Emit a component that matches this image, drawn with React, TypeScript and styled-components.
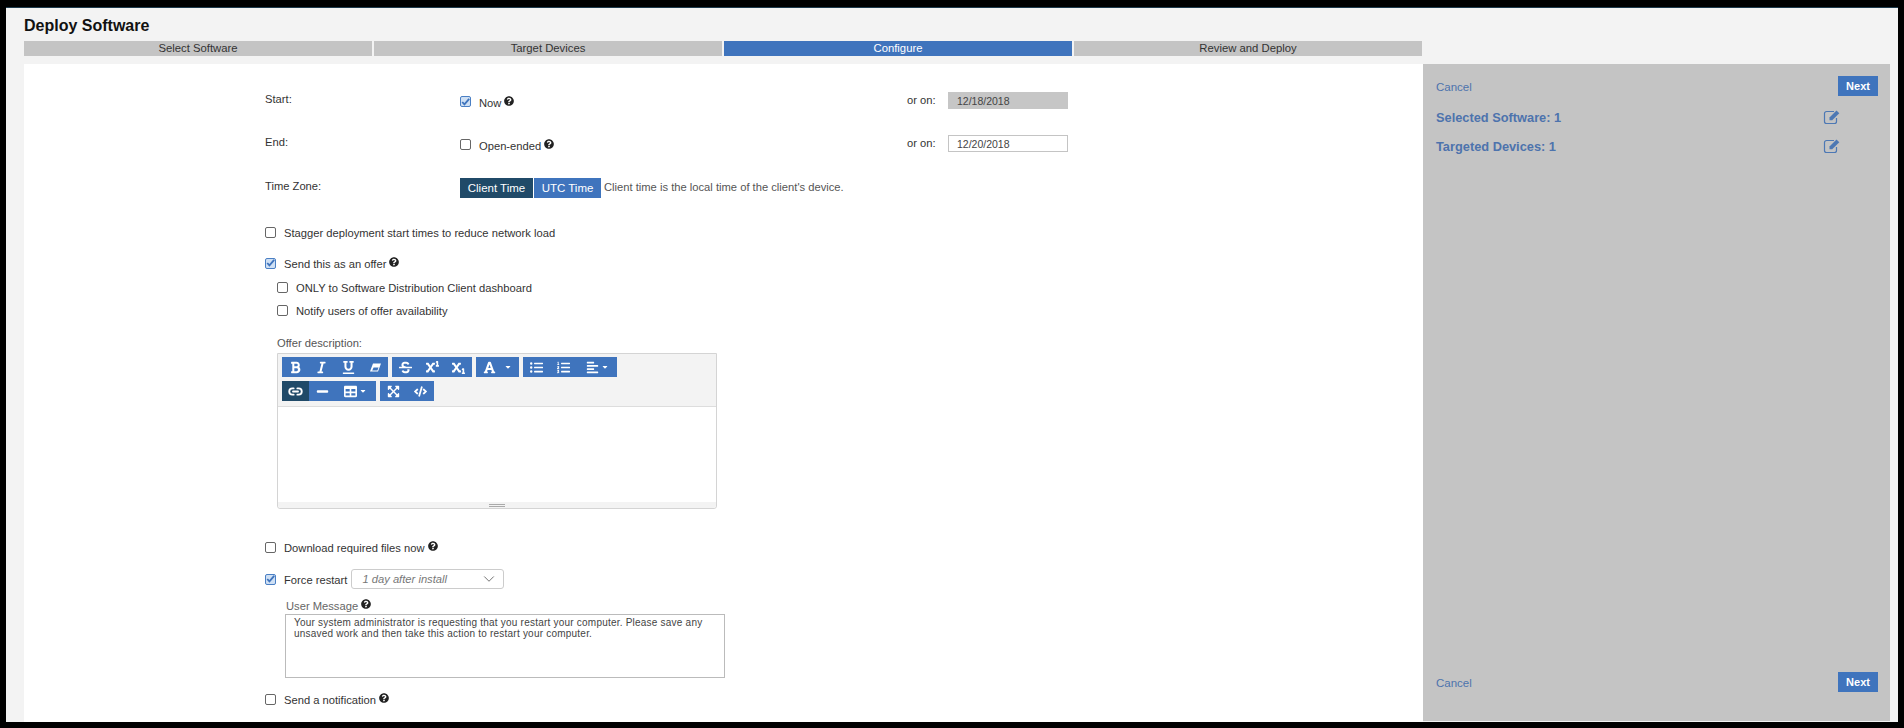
import React from "react";
import styled, { createGlobalStyle } from "styled-components";
import { FaBold, FaItalic, FaUnderline, FaStrikethrough, FaSuperscript, FaSubscript, FaFont, FaListUl, FaListOl, FaAlignLeft, FaMinus, FaTable, FaExpandArrowsAlt, FaCode, FaQuestionCircle, FaCaretDown } from "react-icons/fa";
import { Link2, ChevronDown } from "lucide-react";

const Global = createGlobalStyle`
  html, body { margin: 0; padding: 0; background: #000; }
  body { font-family: "Liberation Sans", Arial, sans-serif; font-size: 11.2px; color: #333; }
`;

const Frame = styled.div`
  box-sizing: border-box; width: 1904px; height: 728px; background: #000;
  padding: 7px 6px 6px 6px; overflow: hidden;
`;
const Page = styled.div`
  height: 715px; background: #f3f3f3; border-top: 1px solid #1d3a4c; box-sizing: border-box;
  padding: 0 8px 0 18px; display: flex; flex-direction: column; overflow: hidden;
`;
const Title = styled.h1`
  margin: 6px 0 0; height: 27px; line-height: 23px; font-size: 16px; font-weight: 700; color: #111;
`;
const Tabs = styled.div`
  display: grid; grid-template-columns: repeat(4, 1fr); gap: 2px; width: 1398px; height: 15px;
`;
const Tab = styled.div<{ $active?: boolean }>`
  background: ${p => p.$active ? "#3f74bd" : "#c4c4c4"};
  color: ${p => p.$active ? "#fff" : "#333"};
  font-size: 11.3px; line-height: 15px; text-align: center;
`;
const Body = styled.div`
  margin-top: 8px; flex: 1; display: flex; min-height: 0;
`;
const Main = styled.main`
  width: 1399px; background: #fff; box-sizing: border-box; padding: 0 0 0 241px; overflow: hidden;
`;
const Side = styled.aside`
  flex: 1; background: #c4c4c4; box-sizing: border-box; padding: 12px 12px 0 13px;
  display: flex; flex-direction: column; margin-bottom: 1px;
`;
const Row = styled.div<{ $top: number; $h?: number; $indent?: number }>`
  display: flex; align-items: center; margin-top: ${p => p.$top}px; height: ${p => p.$h ?? 16}px;
  margin-left: ${p => p.$indent ?? 0}px;
`;
const FieldLabel = styled.div`
  width: 195px; color: #333; position: relative; top: -2px;
`;
const Cell = styled.div`
  width: 447px; display: flex; align-items: center; position: relative; top: 2px;
`;
const OrOn = styled.div`
  width: 41px; color: #333; position: relative; top: -1px;
`;
const DateInput = styled.input<{ $off?: boolean }>`
  box-sizing: border-box; width: 120px; height: 17px; padding: 0 8px;
  font: 10.5px "Liberation Sans", Arial, sans-serif; color: #444;
  border: 1px solid ${p => p.$off ? "#c6c6c6" : "#c4c4c4"};
  background: ${p => p.$off ? "#c6c6c6" : "#fff"}; outline: none;
`;
const Box = styled.span<{ $on?: boolean }>`
  box-sizing: border-box; width: 11px; height: 11px; flex: none; border-radius: 2px;
  border: 1px solid ${p => p.$on ? "#4a7fc4" : "#666"};
  background: ${p => p.$on ? "#cfe0f4" : "#fff"};
  margin-right: 8px; display: flex; align-items: center; justify-content: center;
  position: relative; top: -1px;
`;
const Text = styled.span`
  color: #333; white-space: nowrap;
`;
const Help = styled(FaQuestionCircle)`
  width: 10px; height: 10px; color: #222; margin-left: 3px; position: relative; top: -2px;
`;
const Check = ({ on, children }: { on?: boolean; children: React.ReactNode }) => (
  <>
    <Box $on={on}>
      {on && (
        <svg width="11" height="10" viewBox="0 0 11 10">
          <path d="M1.5 5 L4.2 8 L10 1.2" fill="none" stroke="#3f74bd" strokeWidth="2.2" />
        </svg>
      )}
    </Box>
    <Text>{children}</Text>
  </>
);
const ToggleGroup = styled.div`
  display: flex; gap: 1px;
`;
const Toggle = styled.button<{ $active?: boolean; $w: number }>`
  width: ${p => p.$w}px; height: 20px; border: 0; padding: 0;
  background: ${p => p.$active ? "#204a68" : "#3f74bd"}; color: #fff;
  font: 11.5px "Liberation Sans", Arial, sans-serif;
`;
const Hint = styled.span`
  color: #555; margin-left: 3px; white-space: nowrap; position: relative; top: -1px;
`;
const Caption = styled.div`
  color: #555; margin: 18px 0 0 12px; white-space: nowrap;
`;
const Editor = styled.div`
  margin: 4px 0 0 12px; width: 440px; height: 156px; box-sizing: border-box; border: 1px solid #d4d4d4;
  border-radius: 0 0 3px 3px; display: flex; flex-direction: column; background: #fff;
`;
const EditorBar = styled.div`
  height: 53px; flex: none; background: #f3f3f3; border-bottom: 1px solid #ddd;
  padding: 3px 0 0 4px; display: flex; flex-direction: column; gap: 4px; box-sizing: border-box;
`;
const BarRow = styled.div`
  display: flex; gap: 4px;
`;
const BarGroup = styled.div`
  display: flex; height: 20px;
`;
const Tool = styled.span<{ $w?: number; $active?: boolean }>`
  width: ${p => p.$w ?? 27}px; height: 20px; display: flex; align-items: center; justify-content: center;
  background: ${p => p.$active ? "#204a68" : "#3f74bd"}; color: #fff;
  svg { width: 13px; height: 13px; }
`;
const Caret = styled(FaCaretDown)<{ $gap?: number }>`
  && { width: 8px; height: 8px; margin-left: ${p => p.$gap ?? 2}px; }
`;
const LinkIcon = styled(Link2)`
  && { width: 15px; height: 15px; }
`;
const EditArea = styled.div`
  flex: 1;
`;
const Grip = styled.div`
  height: 6px; flex: none; background: #f3f3f3; display: flex; justify-content: center; align-items: center;
  border-radius: 0 0 3px 3px;
  &::before { content: ""; width: 16px; height: 1px; border-top: 1px solid #aaa; border-bottom: 1px solid #aaa; }
`;
const Select = styled.div`
  box-sizing: border-box; width: 153px; height: 20px; margin-left: 4px; border: 1px solid #ccc; border-radius: 3px;
  padding: 0 5px 0 10px; display: flex; align-items: center; justify-content: space-between;
  font-style: italic; color: #777; background: #fff;
  position: relative; top: -1px;
`;
const SubLabel = styled.div`
  margin: 9px 0 0 21px; height: 14px; line-height: 14px; color: #666; display: flex; align-items: center;
`;
const Message = styled.textarea`
  display: block; box-sizing: border-box; margin: 1px 0 0 20px; width: 440px; height: 64px; resize: none;
  border: 1px solid #bbb; padding: 2px 8px; outline: none; overflow: hidden;
  font: 10px/11px "Liberation Sans", Arial, sans-serif; letter-spacing: 0.22px; color: #444; background: #fff;
`;
const SideRow = styled.div<{ $bottom?: number }>`
  display: flex; align-items: center; justify-content: space-between; margin-bottom: ${p => p.$bottom ?? 0}px;
`;
const Cancel = styled.a`
  color: #4d73ad; font-size: 11.5px; position: relative; top: 1px;
`;
const Next = styled.button`
  width: 40px; height: 20px; border: 0; padding: 0; background: #3f74bd; color: #fff;
  font: 700 11px "Liberation Sans", Arial, sans-serif;
`;
const Summary = styled.div`
  display: flex; align-items: center; height: 16px; margin-top: 13px; padding-right: 37px; justify-content: space-between;
`;
const SummaryText = styled.a`
  color: #4d73ad; font-size: 12.8px; font-weight: 700;
`;
const EditSvg = styled.svg`
  width: 18px; height: 16px; color: #4d78b4;
`;
const EditIcon = () => (
  <EditSvg viewBox="0 0 18 16">
    <path d="M11 2.5 H3.5 A2 2 0 0 0 1.5 4.5 V12.5 A2 2 0 0 0 3.5 14.5 H11.5 A2 2 0 0 0 13.5 12.5 V9" fill="none" stroke="currentColor" strokeWidth="1.2" />
    <path d="M6.5 8.5 L13.5 1.5 L16.3 4.2 L9.2 11.3 H6.5 Z" fill="currentColor" />
  </EditSvg>
);
const EraserSvg = () => (
  <svg viewBox="0 0 13 13">
    <path d="M4 2.5 H12 L9 10.5 H1 Z M4.6 6.5 L3.2 9.5 H8.4 L9.6 6.5 Z" fill="currentColor" fillRule="evenodd" />
  </svg>
);
const Spacer = styled.div`
  flex: 1;
`;

export default function App() {
  return (
    <>
      <Global />
      <Frame>
        <Page>
          <Title>Deploy Software</Title>
          <Tabs>
            <Tab>Select Software</Tab>
            <Tab>Target Devices</Tab>
            <Tab $active>Configure</Tab>
            <Tab>Review and Deploy</Tab>
          </Tabs>
          <Body>
            <Main>
              <Row $top={28} $h={17}>
                <FieldLabel>Start:</FieldLabel>
                <Cell><Check on>Now</Check><Help /></Cell>
                <OrOn>or on:</OrOn>
                <DateInput $off readOnly value="12/18/2018" />
              </Row>
              <Row $top={26} $h={17}>
                <FieldLabel>End:</FieldLabel>
                <Cell><Check>Open-ended</Check><Help /></Cell>
                <OrOn>or on:</OrOn>
                <DateInput readOnly value="12/20/2018" />
              </Row>
              <Row $top={26} $h={20}>
                <FieldLabel>Time Zone:</FieldLabel>
                <ToggleGroup>
                  <Toggle $active $w={73}>Client Time</Toggle>
                  <Toggle $w={67}>UTC Time</Toggle>
                </ToggleGroup>
                <Hint>Client time is the local time of the client's device.</Hint>
              </Row>
              <Row $top={27}><Check>Stagger deployment start times to reduce network load</Check></Row>
              <Row $top={15}><Check on>Send this as an offer</Check><Help /></Row>
              <Row $top={8} $indent={12}><Check>ONLY to Software Distribution Client dashboard</Check></Row>
              <Row $top={7} $indent={12}><Check>Notify users of offer availability</Check></Row>
              <Caption>Offer description:</Caption>
              <Editor>
                <EditorBar>
                  <BarRow>
                    <BarGroup>
                      <Tool $w={26}><FaBold /></Tool><Tool><FaItalic /></Tool><Tool><FaUnderline /></Tool><Tool $w={26}><EraserSvg /></Tool>
                    </BarGroup>
                    <BarGroup>
                      <Tool><FaStrikethrough /></Tool><Tool $w={26}><FaSuperscript /></Tool><Tool><FaSubscript /></Tool>
                    </BarGroup>
                    <BarGroup>
                      <Tool $w={43}><FaFont /><Caret $gap={8} /></Tool>
                    </BarGroup>
                    <BarGroup>
                      <Tool><FaListUl /></Tool><Tool><FaListOl /></Tool><Tool $w={40}><FaAlignLeft /><Caret /></Tool>
                    </BarGroup>
                  </BarRow>
                  <BarRow>
                    <BarGroup>
                      <Tool $active><LinkIcon strokeWidth={3} /></Tool>
                      <Tool $w={26}><FaMinus /></Tool>
                      <Tool $w={41}><FaTable /><Caret /></Tool>
                    </BarGroup>
                    <BarGroup>
                      <Tool><FaExpandArrowsAlt /></Tool><Tool><FaCode /></Tool>
                    </BarGroup>
                  </BarRow>
                </EditorBar>
                <EditArea />
                <Grip />
              </Editor>
              <Row $top={31}><Check>Download required files now</Check><Help /></Row>
              <Row $top={14} $h={20}>
                <Check on>Force restart</Check>
                <Select>1 day after install<ChevronDown size={18} strokeWidth={1.1} color="#555" /></Select>
              </Row>
              <SubLabel>User Message<Help /></SubLabel>
              <Message readOnly value="Your system administrator is requesting that you restart your computer. Please save any unsaved work and then take this action to restart your computer." />
              <Row $top={14}><Check>Send a notification</Check><Help /></Row>
            </Main>
            <Side>
              <SideRow><Cancel>Cancel</Cancel><Next>Next</Next></SideRow>
              <Summary><SummaryText>Selected Software: 1</SummaryText><EditIcon /></Summary>
              <Summary><SummaryText>Targeted Devices: 1</SummaryText><EditIcon /></Summary>
              <Spacer />
              <SideRow $bottom={29}><Cancel>Cancel</Cancel><Next>Next</Next></SideRow>
            </Side>
          </Body>
        </Page>
      </Frame>
    </>
  );
}
